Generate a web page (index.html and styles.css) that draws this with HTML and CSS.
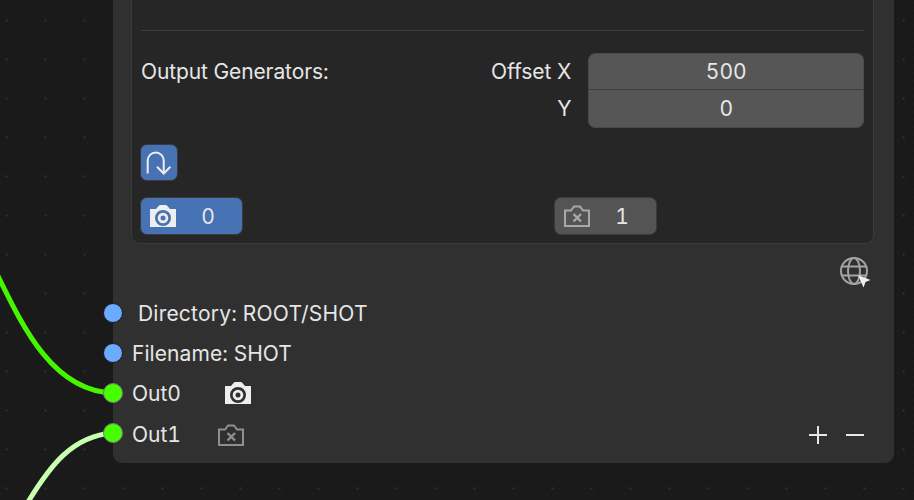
FILE: index.html
```html
<!DOCTYPE html>
<html lang="en">
<head>
<meta charset="utf-8">
<title>Node</title>
<link rel="stylesheet" href="styles.css">
</head>
<body>
<div class="canvas">
  <svg class="wires" width="914" height="500" viewBox="0 0 914 500">
    <path class="wire-a" d="M-4 272C22 325 52 391 113 393"/>
    <path class="wire-b" d="M113 433C72 436 50 466 28 502"/>
  </svg>
  <section class="node">
    <div class="panel">
      <div class="divider"></div>
      <div class="output-row">
        <span class="output-title">Output Generators:</span>
        <div class="offset-labels"><span>Offset X</span><span>Y</span></div>
        <div class="fields"><div class="field field-x">500</div><div class="field field-y">0</div></div>
      </div>
      <button class="icon-btn">
        <svg width="26" height="26" viewBox="0 0 26 26"><path d="M1.700 23.500V10.500a8 8 0 0 1 16 0V24M11 16.800l6.700 6.700 6.700-6.700"/></svg>
      </button>
      <div class="counters">
        <button class="counter on">
          <svg class="cam" width="26" height="22" viewBox="0 0 26 22"><path fill-rule="evenodd" d="M0 4h6l2.500-3q.8-1 2-1h5q1.200 0 2 1L20 4h6v18H0zM13 5a8 8 0 1 0 0 16 8 8 0 0 0 0-16zm0 2.700a5.300 5.300 0 1 1 0 10.600 5.300 5.300 0 0 1 0-10.600zm0 2.800a2.500 2.500 0 1 0 0 5 2.500 2.500 0 0 0 0-5z"/></svg>
          <span>0</span>
        </button>
        <button class="counter off">
          <svg class="cam-x" width="26" height="22" viewBox="0 0 26 22"><path d="M1 21V5.500h6l3-4h6l3 4h6V21z"/><path class="x" d="M9.500 9l7.500 7.500M17 9l-7.500 7.500"/></svg>
          <span>1</span>
        </button>
      </div>
    </div>
    <div class="globe-row">
      <svg width="32" height="32" viewBox="0 0 32 32">
        <g class="globe"><circle cx="14" cy="14" r="13"/><ellipse cx="14" cy="14" rx="6" ry="13"/><path d="M2 9.500h24M2 18.500h24"/></g>
        <path class="cursor" d="M18 18l12.500 5-5 2-2 5.500z"/>
      </svg>
    </div>
    <ul class="sockets">
      <li class="row first"><i class="dot blue"></i>Directory: ROOT/SHOT</li>
      <li class="row"><i class="dot blue"></i><span class="fname">Filename: SHOT</span></li>
      <li class="row"><i class="dot green"></i><span class="name">Out0</span>
        <svg class="cam-row" width="26" height="22" viewBox="0 0 26 22"><path fill-rule="evenodd" d="M0 4h6l2.500-3q.8-1 2-1h5q1.200 0 2 1L20 4h6v18H0zM13 5a8 8 0 1 0 0 16 8 8 0 0 0 0-16zm0 2.700a5.300 5.300 0 1 1 0 10.600 5.300 5.300 0 0 1 0-10.600zm0 2.800a2.500 2.500 0 1 0 0 5 2.500 2.500 0 0 0 0-5z"/></svg>
      </li>
      <li class="row last"><i class="dot green"></i><span class="name">Out1</span>
        <svg class="cam-x-row" width="26" height="22" viewBox="0 0 26 22"><path d="M1 21V5.500h6l3-4h6l3 4h6V21z"/><path class="x" d="M9.500 9l7.500 7.500M17 9l-7.500 7.500"/></svg>
        <span class="pm">
          <svg width="18" height="18" viewBox="0 0 18 18"><path d="M0 9h18M9 0v18"/></svg>
          <svg width="18" height="18" viewBox="0 0 18 18"><path d="M0 9h18"/></svg>
        </span>
      </li>
    </ul>
  </section>
</div>
</body>
</html>
```
FILE: styles.css
```css
* { box-sizing: border-box; }
html, body { margin: 0; height: 100%; }
body { overflow: hidden; background: #1a1a1a; font-family: Inter, "Liberation Sans", sans-serif; font-size: 21px; color: #e6e6e6; font-variant-numeric: tabular-nums; }
.canvas {
  position: relative; width: 914px; height: 500px; overflow: hidden; background-color: #1a1a1a;
  background-image: radial-gradient(circle at 1.500px 1.500px, #2a2a2a 1px, transparent 1.500px), radial-gradient(circle at .5px .5px, #202020 .7px, transparent 1px);
  background-size: 39px 39px, 7.800px 7.800px;
  background-position: 5px 19px, 1px 2px;
}
.wires { position: absolute; left: 0; top: 0; }
.wires path { fill: none; stroke-width: 5px; }
.wire-a { stroke: #46f500; }
.wire-b { stroke: #c9ffb0; }
.node { position: relative; margin-left: 113px; width: 781px; height: 463px; background: #303030; border-radius: 0 0 9px 9px; }
.panel { margin-left: 18px; width: 743px; height: 244px; background: #262626; border: 1px solid #3a3a3a; border-top: 0; border-radius: 0 0 9px 9px; padding: 30px 9px 0 9px; }
.divider { height: 1px; background: #3d3d3d; }
.output-row { display: flex; margin-top: 22px; }
.output-title { width: 351px; line-height: 37px; white-space: nowrap; letter-spacing: -.1px; }
.offset-labels { width: 80px; margin-right: 17px; display: flex; flex-direction: column; align-items: flex-end; line-height: 37px; white-space: nowrap; }
.fields { width: 276px; height: 75px; border-radius: 7px; overflow: hidden; border: 1px solid #4a4a4a; background: #3d3d3d; display: flex; flex-direction: column; gap: 1px; }
.field { background: #565656; text-align: center; }
.field-x { height: 35px; line-height: 35px; }
.field-y { height: 37px; line-height: 37px; }
button { font: inherit; font-variant-numeric: tabular-nums; color: inherit; border: 0; padding: 0; }
.icon-btn { display: flex; align-items: center; justify-content: center; width: 38px; height: 37px; margin: 16px 0 0 -1px; background: #4772b3; border: 1px solid #3a3a3a; border-radius: 7px; }
.icon-btn path { fill: none; stroke: #eeeeee; stroke-width: 2px; }
.counters { display: grid; grid-template-columns: 414px 103px; margin: 16px 0 0 -1px; }
.counter { display: flex; align-items: center; width: 103px; height: 38px; padding-left: 9px; border: 1px solid #3a3a3a; border-radius: 7px; }
.counter span { width: 34px; margin-left: 15px; text-align: center; }
.on { background: #4772b3; }
.off { background: #545454; }
.cam path, .cam-row path { fill: #eeeeee; }
.cam-x path, .cam-x-row path { fill: none; stroke: #a8a8a8; stroke-width: 2px; }
.cam-x-row path { stroke: #8f8f8f; }
.cam-x .x, .cam-x-row .x { stroke-width: 2.400px; }
.globe-row { display: flex; justify-content: flex-end; padding: 13px 22px 0 0; height: 49px; }
.globe circle, .globe ellipse, .globe path { fill: none; stroke: #a3a3a3; stroke-width: 2px; }
.cursor { fill: #eeeeee; }
.sockets { list-style: none; margin: 0; padding: 0 0 0 19px; }
.row { position: relative; display: flex; align-items: center; height: 40px; white-space: nowrap; }
.first { padding-left: 6px; letter-spacing: .2px; }
.fname { letter-spacing: .07px; }
.dot { position: absolute; left: -29px; top: 10px; width: 20px; height: 20px; border-radius: 50%; border: 1.500px solid #1d1d1d; }
.blue { background: #6aaaff; border-color: #1d1d1d; }
.green { background: #46ff00; border-color: #777777; }
.name { width: 93px; margin-top: 1px; }
.last .name { margin-top: 2px; }
.cam-x-row { margin-left: -7px; margin-top: 3px; }
.pm { display: flex; gap: 19px; margin: 3px 30px 0 auto; }
.pm path { fill: none; stroke: #e6e6e6; stroke-width: 2px; }
```
